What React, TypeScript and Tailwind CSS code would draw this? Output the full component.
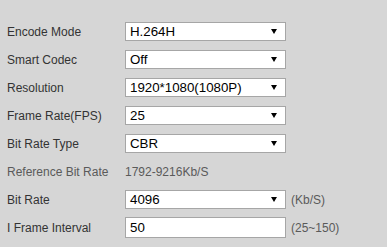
import React from "react";

const Arrow = () => (
  <svg width="6" height="5" viewBox="0 0 6 5" className="absolute right-[8px] top-[6px]">
    <polygon points="0,0 6,0 3,5" fill="#000" />
  </svg>
);

const Select = ({ value }: { value: string }) => (
  <div className="relative w-[161px] h-[19px] bg-white border border-[#a6a6a6] flex items-center pl-[4px] text-[13.3px] text-black">
    {value}
    <Arrow />
  </div>
);

const Row = ({ label, children, gray }: { label: string; children: React.ReactNode; gray?: boolean }) => (
  <div className="flex items-center h-[19px]">
    <div className={`w-[118px] text-[12px] ${gray ? "text-[#5a5a5a]" : "text-[#333]"}`}>{label}</div>
    {children}
  </div>
);

export default function App() {
  return (
    <div
      className="w-[387px] h-[247px] bg-[#d6d6d6] pt-[22px] pl-[7px] flex flex-col gap-[9px] overflow-hidden"
      style={{ fontFamily: '"Liberation Sans", Arial, sans-serif' }}
    >
      <Row label="Encode Mode"><Select value="H.264H" /></Row>
      <Row label="Smart Codec"><Select value="Off" /></Row>
      <Row label="Resolution"><Select value="1920*1080(1080P)" /></Row>
      <Row label="Frame Rate(FPS)"><Select value="25" /></Row>
      <Row label="Bit Rate Type"><Select value="CBR" /></Row>
      <Row label="Reference Bit Rate" gray>
        <div className="text-[12px] text-[#5a5a5a]">1792-9216Kb/S</div>
      </Row>
      <Row label="Bit Rate">
        <Select value="4096" />
        <span className="ml-[5px] text-[12px] text-[#5a5a5a]">(Kb/S)</span>
      </Row>
      <Row label="I Frame Interval">
        <div className="w-[161px] h-[21px] bg-white border border-[#a6a6a6] flex items-center pl-[4px] text-[13.3px] text-black">50</div>
        <span className="ml-[5px] text-[12px] text-[#5a5a5a]">(25~150)</span>
      </Row>
    </div>
  );
}
